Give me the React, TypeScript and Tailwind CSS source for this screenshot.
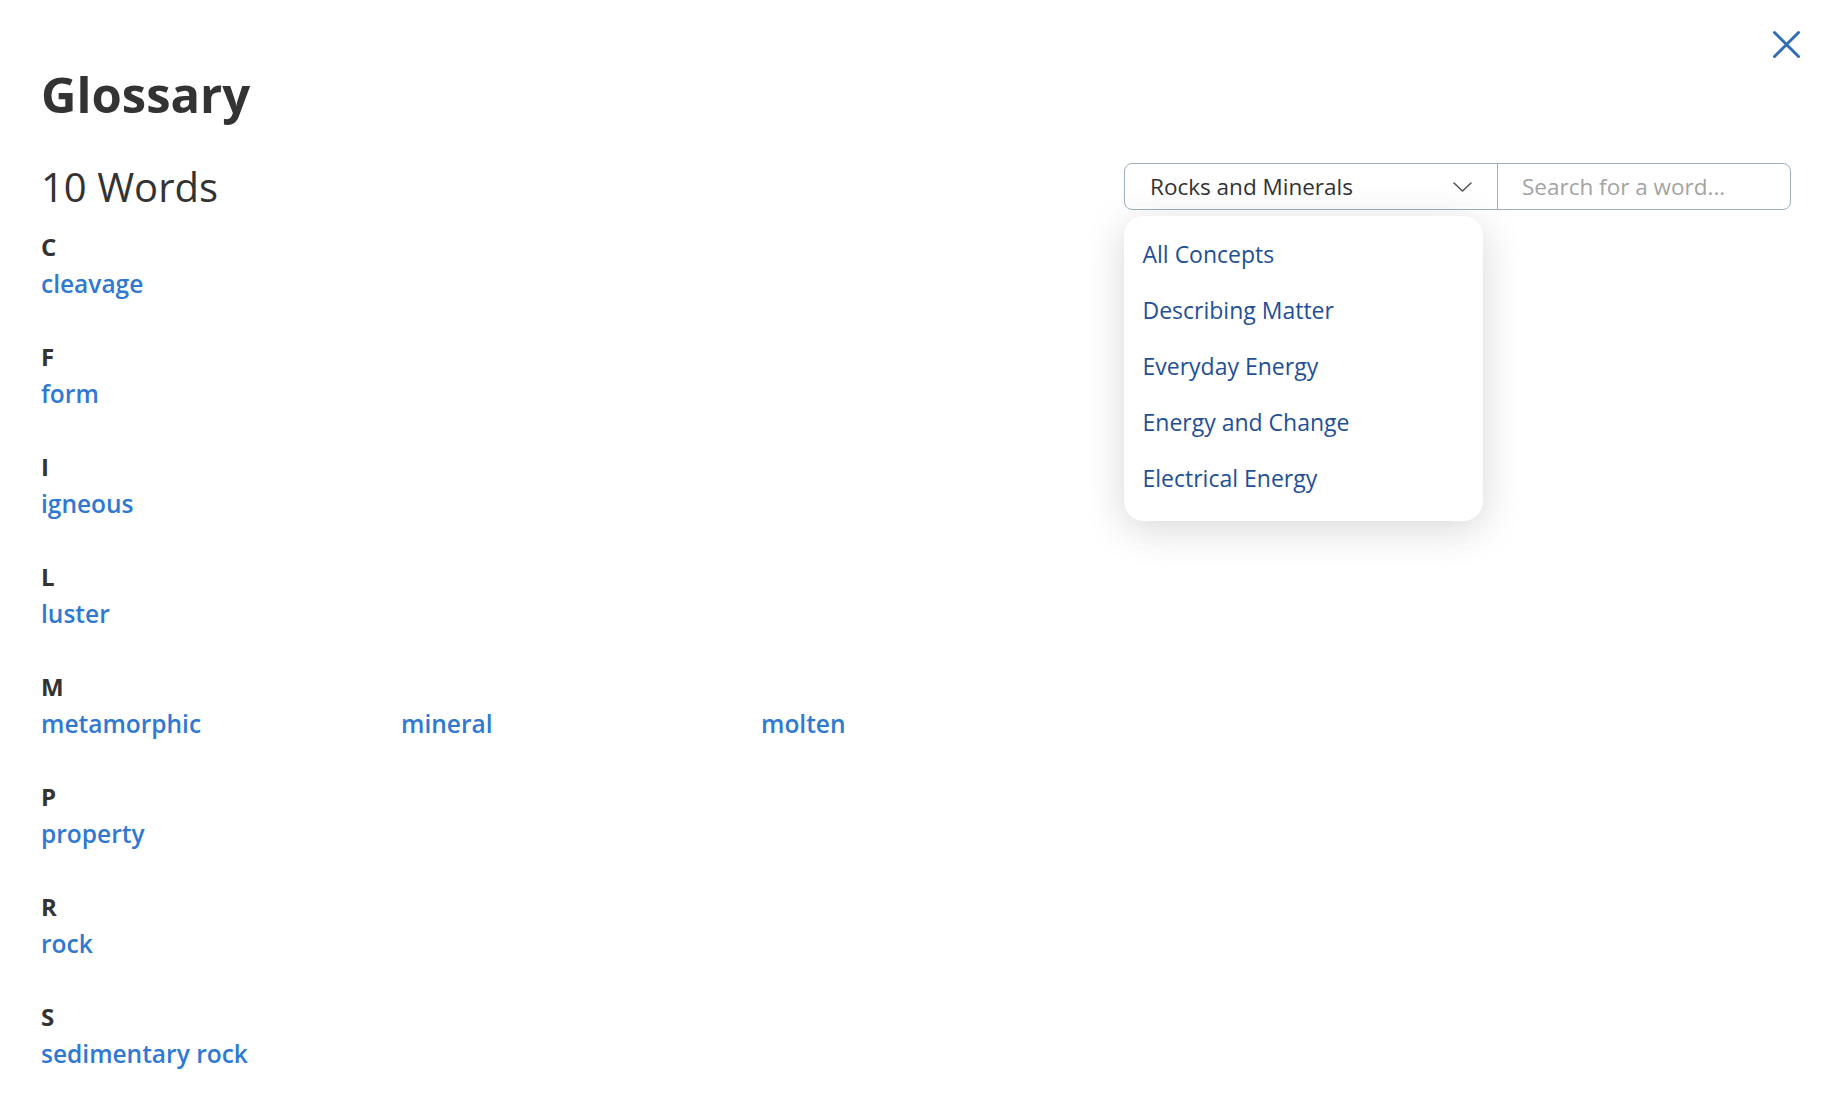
import { useState } from "react";

const SECTIONS: { letter: string; words: string[] }[] = [
  { letter: "C", words: ["cleavage"] },
  { letter: "F", words: ["form"] },
  { letter: "I", words: ["igneous"] },
  { letter: "L", words: ["luster"] },
  { letter: "M", words: ["metamorphic", "mineral", "molten"] },
  { letter: "P", words: ["property"] },
  { letter: "R", words: ["rock"] },
  { letter: "S", words: ["sedimentary rock"] },
];

const CONCEPTS = [
  "All Concepts",
  "Describing Matter",
  "Everyday Energy",
  "Energy and Change",
  "Electrical Energy",
];

export default function App() {
  const [concept] = useState("Rocks and Minerals");

  return (
    <div className="relative min-h-[1100px] bg-white font-['Open_Sans',sans-serif] text-[#333]">
      {/* close */}
      <button className="absolute left-[1772px] top-[30px] w-[29px] h-[29px] flex items-center justify-center">
        <svg width="29" height="29" viewBox="0 0 29 29" fill="none">
          <path d="M2.5 2.5 L26.5 26.5 M26.5 2.5 L2.5 26.5" stroke="#2f6db5" strokeWidth="3" strokeLinecap="round" />
        </svg>
      </button>

      <div className="pl-[41px] pr-[33px] pt-[70px]">
        <h1 className="text-[49px] font-bold leading-none">Glossary</h1>

        <div className="flex items-center justify-between mt-[44px]">
          <h2 className="text-[40px] leading-none font-normal">10 Words</h2>

          <div className="relative flex h-[47px] w-[667px] rounded-[8px] border-[1.5px] border-[#9fb0bd] bg-white">
            <div className="flex w-[373px] items-center justify-between border-r-[1.5px] border-[#9fb0bd] pl-[25px] pr-[25px]">
              <span className="text-[22.5px] text-[#333]">{concept}</span>
              <svg width="19" height="10" viewBox="0 0 19 10" fill="none">
                <path d="M1 1 L9.5 9 L18 1" stroke="#555" strokeWidth="1.6" strokeLinecap="round" strokeLinejoin="round" />
              </svg>
            </div>
            <input
              placeholder="Search for a word..."
              className="flex-1 min-w-0 bg-transparent pl-[24px] pr-3 text-[22.5px] text-[#333] placeholder:text-[#a3a3a3] outline-none"
            />

            <ul className="absolute left-[-1.5px] top-[52px] w-[359px] rounded-[20px] bg-white pt-[10px] pb-[15px] pl-[19px] shadow-[0_8px_40px_rgba(0,0,0,0.16)]">
              {CONCEPTS.map((c) => (
                <li key={c} className="h-[56px] leading-[56px] text-[23px] text-[#1f5096]">
                  {c}
                </li>
              ))}
            </ul>
          </div>
        </div>

        <div className="mt-[25px] flex flex-col gap-[48.5px]">
          {SECTIONS.map((s) => (
            <section key={s.letter}>
              <div className="text-[24px] font-bold leading-none">{s.letter}</div>
              <div className="mt-[13px] grid grid-cols-[360px_360px_360px]">
                {s.words.map((w) => (
                  <a key={w} href="#" className="text-[24.5px] font-semibold leading-none text-[#3079d3]">
                    {w}
                  </a>
                ))}
              </div>
            </section>
          ))}
        </div>
      </div>
    </div>
  );
}
